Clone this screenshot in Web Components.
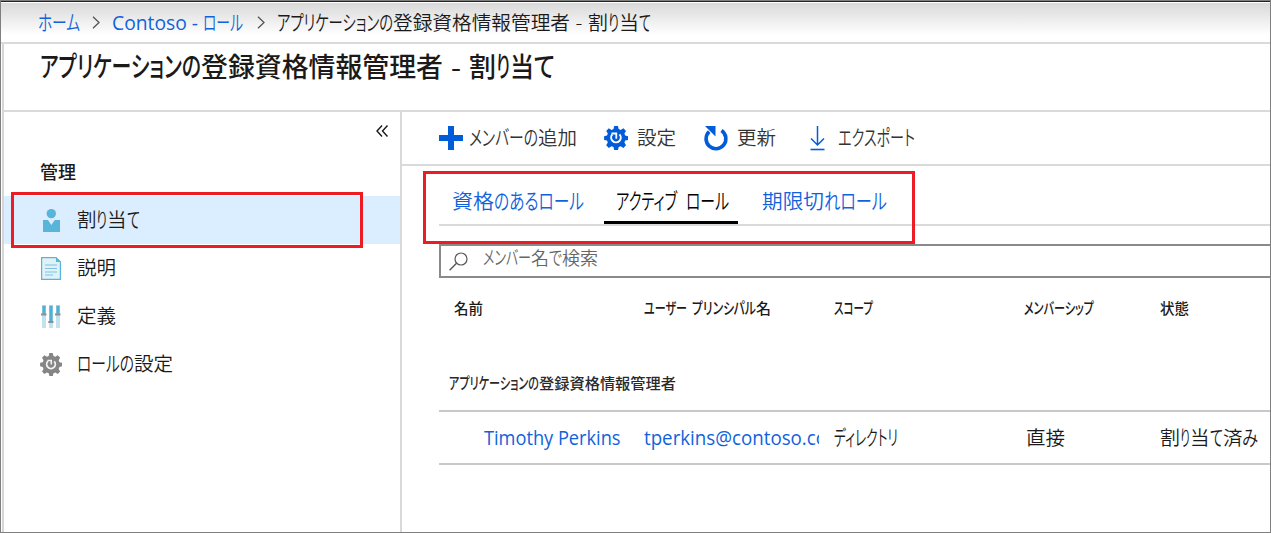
<!DOCTYPE html>
<html lang="ja">
<head>
<meta charset="utf-8">
<title>割り当て</title>
<style>
body { margin: 0; font-family: "Open Sans", "Noto Sans CJK JP", sans-serif; color: #1b1a19; background: #fff; }
</style>
</head>
<body>
<portal-page></portal-page>
<script>
const define = (name, html, setup) => customElements.define(name, class extends HTMLElement {
  connectedCallback() {
    if (this.shadowRoot) return;
    const t = document.createElement('template');
    t.innerHTML = html;
    this.attachShadow({ mode: 'open' }).append(t.content.cloneNode(true));
    if (setup) setup(this, this.shadowRoot);
  }
});

// The w attribute lists one width for each run.
customElements.define('ui-text', class extends HTMLElement {
  connectedCallback() {
    if (this.shadowRoot) return;
    const root = this.attachShadow({ mode: 'open' });
    root.innerHTML = `<style>
      :host { display: inline-flex; white-space: pre; flex: none; line-height: 1.5; }
      span { display: block; flex: none; }
      b { display: block; width: max-content; font-weight: inherit; transform-origin: 0 68%; }
      .kana { font-feature-settings: "palt"; }
    </style>`;
    const runs = this.getAttribute('text').match(/[\u3040-\u30ff]+|[\u4e00-\u9fff]+|[^\u3040-\u30ff\u4e00-\u9fff]+/g);
    const widths = this.getAttribute('w').split(',').map(Number);
    runs.forEach((run, i) => {
      const box = document.createElement('span'), ink = document.createElement('b');
      ink.textContent = run;
      const kana = /[\u3040-\u30ff]/.test(run);
      if (kana) ink.className = 'kana';
      box.append(ink);
      root.append(box);
      const natural = ink.getBoundingClientRect().width;
      box.style.width = widths[i] + 'px';
      ink.style.transform = `scale(${widths[i] / natural}, ${kana ? 1.07 : 1})`;
    });
  }
});

const GEAR = 'M12 0h0l1.9.1.8 3 2 .8 2.700-1.600 2.600 2.600-1.600 2.700.8 2 2.800.7v3.600l-2.800.7-.8 2 1.600 2.700-2.600 2.600-2.700-1.600-2 .8-.7 2.900h-3.800l-.7-2.900-2-.8-2.700 1.600-2.600-2.600 1.600-2.700-.8-2-2.900-.7v-3.600l2.900-.7.8-2-1.600-2.700 2.600-2.600 2.700 1.600 2-.8.7-3z';
const ICONS = {
  chevron: [8, 13, '<path d="M1 .7 7 6.500 1 12.300" fill="none" stroke="#555" stroke-width="1.300"/>'],
  collapse: [12, 12, '<path d="M6 .5 1 6l5 5.500M11.500.5 6.500 6l5 5.500" fill="none" stroke="#1b1a19" stroke-width="1.400"/>'],
  person: [17, 23, '<circle cx="8.300" cy="4.600" r="4.700" fill="#59b4d9"/><path d="M0 11h5l3.300 5 3.500-5H17v12H0z" fill="#59b4d9"/>'],
  doc: [20, 23, '<path d="M.6.600H15L19.400 5v17.400H.6z" fill="#e0f2f8" stroke="#59b4d9" stroke-width="1.200"/><path d="M15 0l5 5h-5z" fill="#59b4d9"/><path d="M4 8h12M4 11.500h12M4 15h12M4 18h8" stroke="#7cc3e0" stroke-width="1.200"/>'],
  sliders: [19, 23, '<path d="M1 9h4v14H1zM8 18h4v5H8zM15 9h4v14h-4z" fill="#c2e2f0"/><path d="M1 0h4v9H1zM8 0h4v17H8zM15 0h4v9h-4z" fill="#b8cfd8"/><path d="M1.500 1h3v8h-3zM8.500 1h3v15h-3zM15.500 1h3v8h-3z" fill="#4fb0d8"/><path d="M0 8.500h5.500v2H0zM7.300 16h5.200v2H7.300zM14 8.500h5.500v2H14z" fill="#8f8f8f"/>'],
  gear: [22, 23, `<path transform="scale(.9167 .9583)" d="${GEAR}" fill="#858585"/><path d="M8 8.200a4.300 4.300 0 1 0 6.200.2" fill="none" stroke="#f4f4f4" stroke-width="1.800"/><path d="M7.500 7.500h3.800v4" fill="none" stroke="#f4f4f4" stroke-width="1.500"/>`],
  bluegear: [24, 24, `<path d="${GEAR}" fill="#015cda"/><path d="M8.300 8.400a4.800 4.800 0 1 0 7.200-.1" fill="none" stroke="#fff" stroke-width="2"/><path d="M7.500 7.500H12.300v5.300" fill="none" stroke="#fff" stroke-width="1.800"/>`],
  plus: [24, 24, '<path d="M9 0h6v9h9v6h-9v9H9v-9H0V9h9z" fill="#015cda"/>'],
  refresh: [24, 25, '<path d="M5.200 5.600A9.900 9.900 0 1 0 17.500 4.600" fill="none" stroke="#015cda" stroke-width="3.600"/><path d="M1 0h10.500v10.500z" fill="#015cda"/>'],
  download: [15, 25, '<path d="M7.500 0v19M1 12.500 7.500 19l6.500-6.500" fill="none" stroke="#015cda" stroke-width="1.500"/><path d="M.5 22.700h14v1.600H.5z" fill="#015cda"/>'],
  search: [19, 19, '<circle cx="12" cy="7" r="6" fill="none" stroke="#555" stroke-width="1.200"/><path d="M7.500 11.300.6 18.200" stroke="#555" stroke-width="1.400"/>']
};
define('ui-icon', '<style>:host{display:block;flex:none}svg{display:block;overflow:visible}</style>', (el, root) => {
  const [w, h, body] = ICONS[el.getAttribute('name')];
  root.innerHTML += `<svg width="${w}" height="${h}" viewBox="0 0 ${w} ${h}">${body}</svg>`;
});

define('bread-crumb', `<style>
  :host { display: flex; align-items: center; height: 41px; padding-left: 37px; box-sizing: border-box; font-size: 19.5px; font-weight: 350;
    background: linear-gradient(#d9d9d9, #fff 82%); border-bottom: 2px solid #dadada; }
  .link { color: #1062dc; }
  .latin { font-weight: 400; }
</style>
<ui-text class="link" text="ホーム" w="42"></ui-text><ui-icon name="chevron" style="margin:0 12px"></ui-icon>
<ui-text class="link latin" text="Contoso - " w="91"></ui-text><ui-text class="link" text="ロール" w="40"></ui-text><ui-icon name="chevron" style="margin:0 12px 0 14px"></ui-icon>
<ui-text text="アプリケーションの登録資格情報管理者 - 割り当て" w="116,177,18,20,11,20,12"></ui-text>`);

define('page-title', `<style>
  :host { display: block; height: 68px; box-sizing: border-box; border-bottom: 2px solid #dadada; padding: 3px 0 0 36px; font-size: 27px; font-weight: 500; }
</style><ui-text text="アプリケーションの登録資格情報管理者 - 割り当て" w="161,242,26,27,14,24,21"></ui-text>`);

define('nav-item', `<style>
  :host { display: flex; align-items: center; height: 48px; font-size: 19.5px; font-weight: 350; }
  :host([selected]) { background: #dbeeff; }
  .ic { width: 22px; margin: 0 14.500px 0 36px; display: flex; justify-content: center; }
</style><span class="ic"><slot name="icon"></slot></span><slot></slot>`);

define('side-nav', `<style>
  :host { display: flex; flex-direction: column; width: 396px; border-right: 2px solid #d9d9d9; flex: none; }
  .top { display: flex; justify-content: flex-end; padding: 13px 12px 0 0; }
  h2 { margin: 22px 0 10px 36px; font-size: 18px; font-weight: 500; height: 27px; display: flex; }
</style>
<div class="top"><ui-icon name="collapse"></ui-icon></div>
<h2><ui-text text="管理" w="36"></ui-text></h2>
<nav>
<nav-item selected><ui-icon slot="icon" name="person"></ui-icon><ui-text text="割り当て" w="19.5,11,19.5,13"></ui-text></nav-item>
<nav-item><ui-icon slot="icon" name="doc"></ui-icon><ui-text text="説明" w="39"></ui-text></nav-item>
<nav-item><ui-icon slot="icon" name="sliders" style="margin-right:1px"></ui-icon><ui-text text="定義" w="39"></ui-text></nav-item>
<nav-item><ui-icon slot="icon" name="gear"></ui-icon><ui-text text="ロールの設定" w="57,39"></ui-text></nav-item>
</nav>`);

define('tool-bar', `<style>
  :host { display: flex; align-items: center; height: 54px; box-sizing: border-box; border-bottom: 2px solid #dadada; padding-left: 37px; font-size: 19.5px; font-weight: 350; color: #333; }
  .cmd { display: flex; align-items: center; }
</style>
<div class="cmd" style="gap:6px;margin-right:27px"><ui-icon name="plus"></ui-icon><ui-text text="メンバーの追加" w="69,39"></ui-text></div>
<div class="cmd" style="gap:9px;margin-right:28px"><ui-icon name="bluegear"></ui-icon><ui-text text="設定" w="39"></ui-text></div>
<div class="cmd" style="gap:9px;margin-right:34px"><ui-icon name="refresh"></ui-icon><ui-text text="更新" w="39"></ui-text></div>
<div class="cmd" style="gap:13px"><ui-icon name="download"></ui-icon><ui-text text="エクスポート" w="77"></ui-text></div>`);

define('tab-strip', `<style>
  :host { display: flex; height: 60px; box-sizing: border-box; border-bottom: 2px solid #dadada; font-size: 20.500px; font-weight: 350; color: #1062dc; }
  div { padding: 20px 12px 0 13px; height: 58px; box-sizing: border-box; display: flex; align-items: flex-start; }
  .on { color: #000; border-bottom: 3px solid #000; padding: 20px 9px 0 12px; margin: 0 11px 0 8px; }
</style>
<div><ui-text text="資格のあるロール" w="42,90"></ui-text></div>
<div class="on"><ui-text text="アクティブ ロール" w="61,9,43"></ui-text></div>
<div><ui-text text="期限切れロール" w="62,63"></ui-text></div>`);

define('search-box', `<style>
  :host { display: flex; height: 34px; margin-top: 18px; box-sizing: border-box; border: 2px solid #8a8a8a; border-right: 0; padding: 6px 0 0 8px; color: #666; font-size: 18px; font-weight: 350; }
  ui-text { margin: -7px 0 0 15px; }
</style><ui-icon name="search"></ui-icon><ui-text text="メンバー名で検索" w="48,18,13,36"></ui-text>`);

define('member-table', `<style>
  :host { display: block; }
  .row { display: grid; grid-template-columns: 205px 190px 190px 136px 110px; align-items: center; }
  .row > * { overflow: hidden; }
  .head { height: 60px; font-size: 15px; font-weight: 500; }
  .head > :first-child { padding-left: 15px; }
  .group { margin-top: 34px; padding-left: 10px; height: 38px; font-size: 15.200px; font-weight: 500; color: #2b2a29; display: flex; }
  .data { height: 55px; box-sizing: border-box; border: solid #c8c8c8; border-width: 2px 0; font-size: 19.500px; font-weight: 350; }
  .data > :first-child { padding-left: 44.500px; }
  .link { color: #1062dc; font-weight: 400; }
  .upn { width: 175px; }
</style>
<div class="row head">
<div><ui-text text="名前" w="29"></ui-text></div><div><ui-text text="ユーザー プリンシパル名" w="43,5,64,15"></ui-text></div><div><ui-text text="スコープ" w="39"></ui-text></div><div><ui-text text="メンバーシップ" w="70"></ui-text></div><div><ui-text text="状態" w="29"></ui-text></div>
</div>
<div class="group"><ui-text text="アプリケーションの登録資格情報管理者" w="90,137"></ui-text></div>
<div class="row data">
<div class="link"><ui-text text="Timothy Perkins" w="136.500"></ui-text></div><div class="link upn"><ui-text text="tperkins@contoso.co" w="183"></ui-text></div><div><ui-text text="ディレクトリ" w="64"></ui-text></div><div style="padding-left:2px"><ui-text text="直接" w="39"></ui-text></div><div><ui-text text="割り当て済み" w="20,10,19.500,13,19.500,16"></ui-text></div>
</div>`);

define('call-out', '<style>:host{display:block;position:absolute;box-sizing:border-box;border:3px solid #ed1c24}</style>');

define('portal-page', `<style>
  :host { display: block; position: relative; width: 1271px; height: 533px; box-sizing: border-box; border: 1px solid #7f7f7f; overflow: hidden; }
  .edge { height: 1px; background: #222; }
  bread-crumb { margin-top: 1px; }
  .blade { margin-left: 1px; border-left: 2px solid #d9d5d5; height: 489px; }
  .cols { display: flex; height: 421px; }
  main { flex: 1; min-width: 0; }
  .content { padding-left: 37px; }
  .c1 { left: 10px; top: 191px; width: 352px; height: 56px; }
  .c2 { left: 422px; top: 170px; width: 492px; height: 73px; }
</style>
<div class="edge"></div>
<bread-crumb></bread-crumb>
<div class="blade">
<page-title></page-title>
<div class="cols"><side-nav></side-nav>
<main><tool-bar></tool-bar><div class="content"><tab-strip></tab-strip><search-box></search-box><member-table></member-table></div></main></div>
</div>
<call-out class="c1"></call-out><call-out class="c2"></call-out>`);
</script>
</body>
</html>
